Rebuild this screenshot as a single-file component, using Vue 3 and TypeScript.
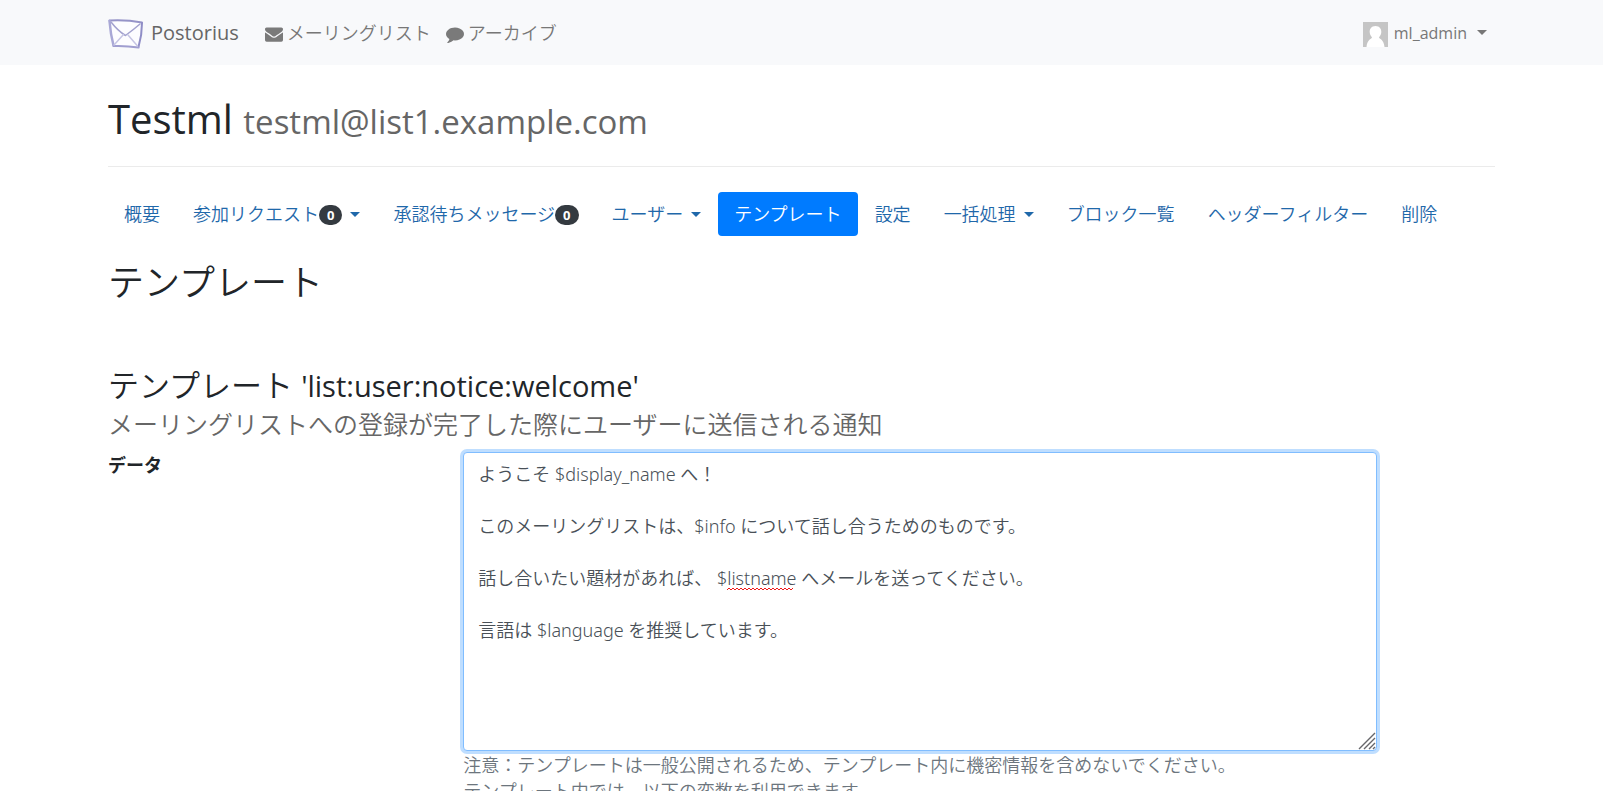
<script setup lang="ts">
import { ref } from 'vue'

interface Tab {
  label: string
  badge?: number
  menu?: boolean
  active?: boolean
}

const tabs: Tab[] = [
  { label: '概要' },
  { label: '参加リクエスト', badge: 0, menu: true },
  { label: '承認待ちメッセージ', badge: 0 },
  { label: 'ユーザー', menu: true },
  { label: 'テンプレート', active: true },
  { label: '設定' },
  { label: '一括処理', menu: true },
  { label: 'ブロック一覧' },
  { label: 'ヘッダーフィルター' },
  { label: '削除' },
]

const body = ref(
  [
    'ようこそ $display_name へ！',
    '',
    'このメーリングリストは、$info について話し合うためのものです。',
    '',
    '話し合いたい題材があれば、 $listname へメールを送ってください。',
    '',
    '言語は $language を推奨しています。',
  ].join('\n'),
)
</script>

<template>
  <header class="navbar">
    <div class="container bar">
      <a class="brand" href="#">
        <svg class="logo" viewBox="0 0 36 32" aria-hidden="true">
          <path d="M2 3.500L33.500 5.500L30.500 30.500L6 28.500Z" fill="#fdfdff" />
          <g fill="none" stroke-linecap="round" stroke-linejoin="round">
            <path d="M1.500 3.500Q18 2.500 34 5.500" stroke="#9694c8" stroke-width="2" />
            <path d="M1.500 4Q2.500 17 5.500 28.500" stroke="#a9a8d6" stroke-width="2.500" />
            <path d="M34 6Q34 18 30.500 30" stroke="#8f8dc6" stroke-width="2" />
            <path d="M5.500 29Q18 28.500 30.500 30.500" stroke="#a09ed0" stroke-width="2" />
            <path d="M3 5Q10 14 17.500 18.500Q25 13 32 7" stroke="#a3a2cf" stroke-width="1.500" />
            <path d="M6 28L15.500 17.500M29.500 29L20 18" stroke="#c6c5e4" stroke-width="1.500" />
          </g>
        </svg>
        <span>Postorius</span>
      </a>
      <nav class="links">
        <a href="#">
          <svg class="icon" viewBox="0 0 1792 1792" aria-hidden="true"><path d="M1792 710v794q0 66-47 113t-113 47h-1472q-66 0-113-47t-47-113v-794q44 49 101 87 362 246 497 345 57 42 92.500 65.500t94.500 48 110 24.500h2q51 0 110-24.500t94.500-48 92.500-65.500q170-123 498-345 57-39 100-87zm0-294q0 79-49 151t-122 123q-376 261-468 325-10 7-42.500 31t-54 38.500-52 32.500-57.500 27-50 9h-2q-23 0-50-9t-57.500-27-52-32.500-54-38.500-42.500-31q-91-64-262-182.500t-205-142.500q-62-42-117-115.500t-55-136.500q0-78 41.500-130t118.500-52h1472q65 0 112.500 47t47.500 113z" /></svg>
          <span>メーリングリスト</span>
        </a>
        <a href="#">
          <svg class="icon" viewBox="0 0 1792 1792" aria-hidden="true"><path d="M1792 896q0 174-120 321.500t-326 233-450 85.500q-70 0-145-8-198 175-460 242-49 14-114 22-17 2-30.500-9t-17.500-29v-1q-3-4-.5-12t2-10 4.500-9.500l6-9 7-8.500 8-9q7-8 31-34.500t34.500-38 31-39.500 32.500-51 27-59 26-76q-157-89-247.500-220t-90.500-281q0-130 71-248.500t191-204.500 286-136.500 348-50.500q244 0 450 85.500t326 233 120 321.500z" /></svg>
          <span>アーカイブ</span>
        </a>
      </nav>
      <a class="user" href="#">
        <svg class="avatar" viewBox="0 0 25 25" aria-hidden="true">
          <rect width="25" height="25" fill="#c5c5c5" />
          <path d="M12.500 4C8.500 4 6.500 7 6.700 10C6.800 12.500 7.800 14 9 15.200C9 17 4 17 3.500 25H21.500C21 17 16 17 16 15.200C17.200 14 18.200 12.500 18.300 10C18.500 7 16.500 4 12.500 4Z" fill="#fff" />
        </svg>
        <span>ml_admin</span>
        <span class="caret"></span>
      </a>
    </div>
  </header>

  <main class="container">
    <h1>Testml <small>testml@list1.example.com</small></h1>
    <nav class="tabs">
      <a v-for="tab in tabs" :key="tab.label" href="#" :class="{ active: tab.active }">
        <span>{{ tab.label }}</span>
        <span v-if="tab.badge !== undefined" class="badge">{{ tab.badge }}</span>
        <span v-if="tab.menu" class="caret"></span>
      </a>
    </nav>
    <h2>テンプレート</h2>
    <h3>
      テンプレート <span class="key">'list:user:notice:welcome'</span>
      <small>メーリングリストへの登録が完了した際にユーザーに送信される通知</small>
    </h3>
    <form class="row">
      <label for="data">データ</label>
      <div class="field">
        <div class="editor">
          <textarea id="data" v-model="body" rows="11" spellcheck="false"></textarea>
          <svg class="squiggle" viewBox="0 0 66 4" aria-hidden="true">
            <path d="M0 3L2 1L4 3L6 1L8 3L10 1L12 3L14 1L16 3L18 1L20 3L22 1L24 3L26 1L28 3L30 1L32 3L34 1L36 3L38 1L40 3L42 1L44 3L46 1L48 3L50 1L52 3L54 1L56 3L58 1L60 3L62 1L64 3L66 1" fill="none" stroke="#f01818" />
          </svg>
          <svg class="grip" viewBox="0 0 18 18" aria-hidden="true">
            <path d="M1 17L17 1M6 17L17 6M11 17L17 11M15 17L17 15" fill="none" stroke="#66666a" stroke-width="1.400" />
          </svg>
        </div>
        <p class="help">
          注意：テンプレートは一般公開されるため、テンプレート内に機密情報を含めないでください。<br />
          テンプレート内では、以下の変数を利用できます
        </p>
      </div>
    </form>
  </main>
</template>

<style>
body {
  margin: 0;
  background: #fff;
}

html {
  overflow: hidden;
}

#app {
  font: 350 18px/26px "Open Sans", "Noto Sans CJK JP", sans-serif;
  color: #212529;
}
</style>

<style scoped>
.container {
  box-sizing: border-box;
  max-width: 1421px;
  margin: 0 auto;
  padding: 0 17px;
}

a {
  text-decoration: none;
}

.navbar {
  background: #f8f9fb;
}

.bar {
  display: flex;
  align-items: center;
  height: 65px;
}

.bar a {
  display: flex;
  align-items: center;
  color: #777;
}

.bar .brand {
  gap: 7px;
  margin-right: 26px;
  font-size: 20px;
  font-weight: 400;
  color: #666;
}

.logo {
  width: 36px;
  height: 32px;
}

.links {
  display: flex;
  gap: 15px;
}

.links a {
  gap: 4px;
}

.icon {
  width: 18px;
  height: 18px;
  margin-top: 2px;
  fill: #7a7a7a;
}

.bar .user {
  gap: 6px;
  margin-left: auto;
  padding-right: 8px;
  font-size: 16px;
  font-weight: 400;
}

.avatar {
  width: 25px;
  height: 25px;
  margin-top: 3px;
}

.caret {
  display: inline-block;
  margin-left: 4px;
  border: 5px solid transparent;
  border-top-color: currentColor;
  border-bottom: 0;
}

h1,
h2,
h3 {
  margin: 0;
  font-weight: 350;
}

h1 {
  padding: 27px 0 18px;
  border-bottom: 1px solid #ebebeb;
  font-size: 40px;
  font-weight: 400;
  line-height: 53px;
}

h1 small {
  font-size: 33px;
  color: #666;
}

.tabs {
  display: flex;
  flex-wrap: wrap;
  gap: 1px;
  margin-top: 25px;
}

.tabs a {
  display: flex;
  align-items: center;
  padding: 9px 16px;
  border-radius: 4px;
  color: #1f68aa;
}

.tabs a.active {
  background: #007bff;
  color: #fff;
}

.tabs .caret {
  margin-left: 8px;
}

.badge {
  margin-top: 2px;
  padding: 3px 8px;
  border-radius: 10px;
  background: #343a40;
  color: #fff;
  font-size: 13px;
  font-weight: 700;
  line-height: 14px;
}

h2 {
  margin-top: 26px;
  font-size: 36px;
  line-height: 42px;
}

h3 {
  margin-top: 62px;
  font-size: 31px;
  line-height: 38px;
}

.key {
  font-size: 29px;
  font-weight: 400;
}

h3 small {
  display: block;
  font-size: 25px;
  color: #666;
}

.row {
  display: flex;
  margin: 9px -17px 0;
}

.row label {
  box-sizing: border-box;
  width: 25%;
  padding: 0 17px;
  font-weight: 700;
}

.field {
  box-sizing: border-box;
  width: 66.6667%;
  padding: 0 17px;
}

.editor {
  position: relative;
}

textarea {
  display: block;
  box-sizing: border-box;
  width: 100%;
  padding: 8px 14px 3px;
  border: 1px solid #80bdff;
  border-radius: 4px;
  outline: 0;
  background: #fff;
  box-shadow: 0 0 0 3px #bfdeff;
  color: #495057;
  font: inherit;
  font-family: "Noto Sans", "Noto Sans CJK JP", sans-serif;
  resize: none;
}

.squiggle {
  position: absolute;
  top: 135px;
  left: 262px;
  width: 70px;
  height: 4px;
}

.grip {
  position: absolute;
  right: 1px;
  bottom: 1px;
  width: 18px;
  height: 18px;
}

.help {
  margin: 1px 0 0;
  color: #6c757d;
}
</style>
